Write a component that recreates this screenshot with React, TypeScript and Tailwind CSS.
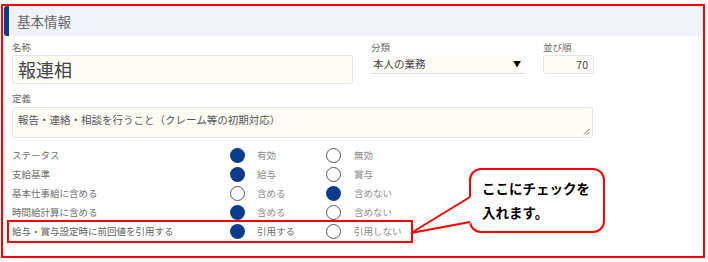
import React from 'react'

const jp = { fontFamily: '"Noto Sans CJK JP", "Noto Sans", sans-serif' }

type Row = { label: string; a: string; b: string; pick: 0 | 1 }

const rows: Row[] = [
  { label: 'ステータス', a: '有効', b: '無効', pick: 0 },
  { label: '支給基準', a: '給与', b: '賞与', pick: 0 },
  { label: '基本仕事給に含める', a: '含める', b: '含めない', pick: 1 },
  { label: '時間給計算に含める', a: '含める', b: '含めない', pick: 0 },
]

function Radio({ on }: { on: boolean }) {
  return on ? (
    <span className="block w-[15px] h-[15px] rounded-full bg-[#0b3c8c]" />
  ) : (
    <span className="block w-[15px] h-[15px] rounded-full border-[1.5px] border-[#555] bg-white" />
  )
}

function RadioRow({ row }: { row: Row }) {
  return (
    <div className="flex items-center h-[19px] text-[9.5px] leading-none">
      <span className="w-[218px] text-[#6b6b6b]">{row.label}</span>
      <Radio on={row.pick === 0} />
      <span className="w-[81px] pl-[12px] text-[#8a8a8a]">{row.a}</span>
      <Radio on={row.pick === 1} />
      <span className="pl-[13px] text-[#8a8a8a]">{row.b}</span>
    </div>
  )
}

export default function App() {
  return (
    <div className="w-[708px] h-[262px] bg-white pt-[4px] pl-[1px]" style={jp}>
      <div className="relative w-[704px] h-[254px] border-2 border-[#ff0000]">
        <div className="flex items-center h-[30px] bg-[#f2f3fa]">
          <span className="ml-[1px] w-[5px] h-[30px] rounded-l-[3px] bg-[#0b3c8c]" />
          <span className="ml-[8px] text-[13.5px] text-[#666]">基本情報</span>
        </div>

        <div className="pl-[9px] pt-[5px]">
          <div className="flex">
            <div className="w-[341px]">
              <div className="text-[9.5px] leading-[13px] text-[#666]">名称</div>
              <div className="mt-[1px] h-[29px] flex items-center pl-[5px] border border-[#e2e4ea] rounded-[3px] bg-[#fdfdf5] text-[18px] text-[#444]">
                報連相
              </div>
            </div>
            <div className="ml-[18px] w-[154px]">
              <div className="text-[9.5px] leading-[13px] text-[#666]">分類</div>
              <div className="mt-[1px] h-[19px] flex items-center justify-between pl-[2px] pr-[4px] border-b border-[#dcdde3] bg-[#fdfdf5] text-[10.5px] text-[#444]">
                <span>本人の業務</span>
                <span className="text-[8px] text-black">▼</span>
              </div>
            </div>
            <div className="ml-[18px] w-[51px]">
              <div className="text-[9.5px] leading-[13px] text-[#666]">並び順</div>
              <div className="mt-[1px] h-[19px] flex items-center justify-end pr-[5px] border border-[#e2e4ea] rounded-[3px] bg-[#fdfdf5] text-[10.5px] text-[#444]">
                70
              </div>
            </div>
          </div>

          <div className="mt-[8px] text-[9.5px] leading-[13px] text-[#666]">定義</div>
          <div className="relative mt-[2px] w-[581px] h-[31px] pl-[5px] pt-[4px] border border-[#e2e4ea] rounded-[3px] bg-[#fdfdf5] text-[10.5px] text-[#555]">
            報告・連絡・相談を行うこと（クレーム等の初期対応）
            <svg className="absolute right-[2px] bottom-[2px]" width="7" height="7" viewBox="0 0 7 7">
              <path d="M1 6.5 L6.5 1 M4 6.5 L6.5 4" stroke="#666" strokeWidth="0.9" />
            </svg>
          </div>

          <div className="mt-[8px]">
            {rows.map(r => (
              <RadioRow key={r.label} row={r} />
            ))}
            <div className="-mt-[2px] -ml-[5px] pl-[3px] w-[406px] border-2 border-[#ff0000]">
              <div className="flex items-center h-[19px] text-[9.5px] leading-none">
                <span className="w-[218px] text-[#5f5f5f]">給与・賞与設定時に前回値を引用する</span>
                <Radio on />
                <span className="w-[81px] pl-[12px] text-[#6f6f6f]">引用する</span>
                <Radio on={false} />
                <span className="pl-[13px] text-[#8a8a8a]">引用しない</span>
              </div>
            </div>
          </div>
        </div>

        <div className="absolute left-[466px] top-[162px] w-[136px] h-[65px] pl-[11px] pt-[6px] border-2 border-[#ff0000] rounded-[12px] bg-white text-[13.5px] leading-[24px] font-bold text-black">
          <div>ここにチェックを</div>
          <div>入れます。</div>
        </div>
        <svg className="absolute left-[400px] top-[185px]" width="75" height="50" viewBox="0 0 75 50">
          <polygon points="69,5 8,42 69,32" fill="white" />
          <polyline points="67,6 8,42 67,31" fill="none" stroke="#ff0000" strokeWidth="2" strokeLinejoin="miter" />
        </svg>
      </div>
    </div>
  )
}
